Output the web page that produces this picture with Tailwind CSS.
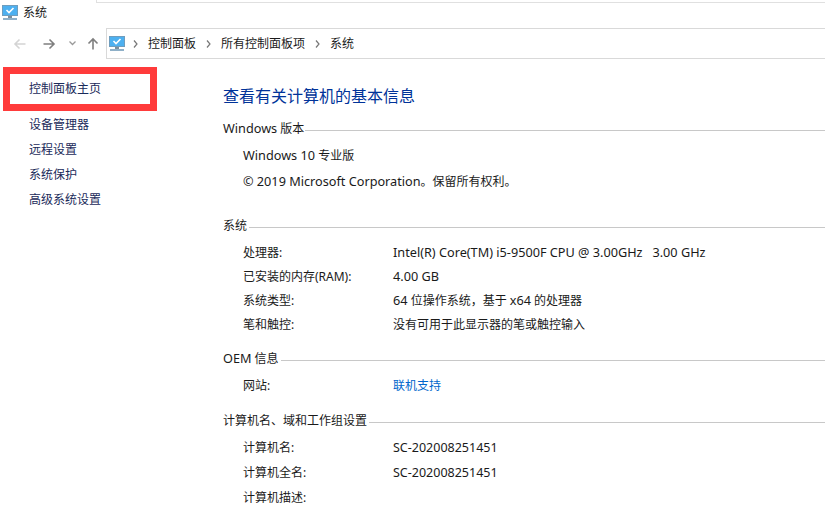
<!DOCTYPE html>
<html lang="zh-CN">
<head>
    <meta charset="UTF-8">
    <title>系统</title>
    <script src="https://cdn.jsdelivr.net/npm/@tailwindcss/browser@4"></script>
</head>
<body class="w-[825px] h-[514px] overflow-hidden bg-white text-[12px] leading-[16px] text-[#1a1a1a] font-['Noto_Sans','Noto_Sans_CJK_SC',sans-serif]">
    <!-- title bar -->
    <div class="relative h-[28px] flex items-center pl-[2px] pb-[3px] gap-[5px]">
        <div class="absolute top-0 left-[96px] right-0 h-[3px] border-l border-b border-[#e0e0e0]"></div>
        <svg width="16" height="15" viewBox="0 0 16 15">
            <rect x="0" y="0" width="16" height="11" fill="#6f9dbd"/>
            <rect x="1" y="1" width="14" height="9" fill="#4db0f0"/>
            <path d="M4.500 5l2.500 2.500 4.500-4.500" fill="none" stroke="#fff" stroke-width="1.600"/>
            <rect x="6" y="11" width="4" height="2" fill="#7d8f9c"/>
            <rect x="1" y="13" width="14" height="2" fill="#8fb0c8"/>
        </svg>
        <span>系统</span>
    </div>
    <!-- nav bar -->
    <div class="h-[31px] flex items-center">
        <div class="w-[106px] flex items-center pl-[13px] shrink-0">
            <svg width="13" height="12" viewBox="0 0 13 12" class="mr-[17px]"><path d="M12.500 6H2M6.500 1.500L2 6l4.500 4.500" fill="none" stroke="#d4d4d4" stroke-width="1.600"/></svg>
            <svg width="13" height="12" viewBox="0 0 13 12" class="mr-[13px]"><path d="M0.500 6H11M6.500 1.500L11 6l-4.500 4.500" fill="none" stroke="#7f7f7f" stroke-width="1.600"/></svg>
            <svg width="7" height="5" viewBox="0 0 7 5" class="mr-[11px]"><path d="M0.500 0.500L3.500 3.500l3-3" fill="none" stroke="#9a9a9a" stroke-width="1.300"/></svg>
            <svg width="12" height="13" viewBox="0 0 12 13"><path d="M6 12.500V2M1.500 6.500L6 2l4.500 4.500" fill="none" stroke="#7f7f7f" stroke-width="1.600"/></svg>
        </div>
        <div class="flex-1 h-[31px] border-y border-l border-[#d9d9d9] flex items-center pl-[2px]">
            <svg width="16" height="15" viewBox="0 0 16 15" class="mr-[8px]">
                <rect x="0" y="0" width="16" height="11" fill="#6f9dbd"/>
                <rect x="1" y="1" width="14" height="9" fill="#4db0f0"/>
                <path d="M4.500 5l2.500 2.500 4.500-4.500" fill="none" stroke="#fff" stroke-width="1.600"/>
                <rect x="6" y="11" width="4" height="2" fill="#7d8f9c"/>
                <rect x="1" y="13" width="14" height="2" fill="#8fb0c8"/>
            </svg>
            <svg width="5" height="8" viewBox="0 0 5 8" class="mr-[10px]"><path d="M1 0.500L4 4 1 7.500" fill="none" stroke="#777" stroke-width="1.200"/></svg>
            <span>控制面板</span>
            <svg width="5" height="8" viewBox="0 0 5 8" class="mx-[10px]"><path d="M1 0.500L4 4 1 7.500" fill="none" stroke="#777" stroke-width="1.200"/></svg>
            <span>所有控制面板项</span>
            <svg width="5" height="8" viewBox="0 0 5 8" class="mx-[10px]"><path d="M1 0.500L4 4 1 7.500" fill="none" stroke="#777" stroke-width="1.200"/></svg>
            <span>系统</span>
        </div>
    </div>
    <div class="flex">
        <!-- left links -->
        <div class="w-[223px] shrink-0 text-[#1a2a5a]">
            <div class="relative h-[41px] pt-[22px] pl-[29px]">
                控制面板主页
                <div class="absolute left-[3px] top-[8px] w-[154px] h-[44px] border-[7px] border-[#ff3b3b]"></div>
            </div>
            <div class="flex flex-col gap-[9px] pl-[29px] pt-[17px]">
                <p>设备管理器</p>
                <p>远程设置</p>
                <p>系统保护</p>
                <p>高级系统设置</p>
            </div>
        </div>
        <!-- main -->
        <div class="flex-1 pt-[26px]">
            <h1 class="text-[16px] leading-[22px] text-[#003399]">查看有关计算机的基本信息</h1>
            <div class="flex items-center mt-[14px] h-[16px]"><span><span class="text-[12.7px] leading-[0]">Windows</span> 版本</span><div class="flex-1 border-t border-[#c8c8c8] ml-[1px] mt-[2px]"></div></div>
            <div class="pl-[20px] pt-[11px] flex flex-col gap-[10px]">
                <p><span class="text-[12.7px] leading-[0]">Windows 10</span> 专业版</p>
                <p><span class="text-[12.7px] leading-[0]">© 2019 Microsoft Corporation</span>。保留所有权利。</p>
            </div>
            <div class="flex items-center mt-[28px] h-[16px]"><span>系统</span><div class="flex-1 border-t border-[#c8c8c8] ml-[2px] mt-[2px]"></div></div>
            <div class="grid grid-cols-[150px_1fr] pl-[20px] pt-[11px] gap-y-[8px]">
                <p>处理器:</p><p><span class="text-[12.7px] leading-[0]">Intel(R) Core(TM) i5-9500F CPU @ 3.00GHz&nbsp;&nbsp; 3.00 GHz</span></p>
                <p>已安装的内存(RAM):</p><p><span class="text-[12.7px] leading-[0]">4.00 GB</span></p>
                <p>系统类型:</p><p><span class="text-[12.7px] leading-[0]">64</span> 位操作系统，基于 <span class="text-[12.7px] leading-[0]">x64</span> 的处理器</p>
                <p>笔和触控:</p><p>没有可用于此显示器的笔或触控输入</p>
            </div>
            <div class="flex items-center mt-[18px] h-[16px]"><span><span class="text-[12.7px] leading-[0]">OEM</span> 信息</span><div class="flex-1 border-t border-[#c8c8c8] ml-[2px] mt-[2px]"></div></div>
            <div class="grid grid-cols-[150px_1fr] pl-[20px] pt-[11px]">
                <p>网站:</p><p class="text-[#0066cc]">联机支持</p>
            </div>
            <div class="flex items-center mt-[19px] h-[16px]"><span>计算机名、域和工作组设置</span><div class="flex-1 border-t border-[#c8c8c8] ml-[2px] mt-[2px]"></div></div>
            <div class="grid grid-cols-[150px_1fr] pl-[20px] pt-[11px] gap-y-[9px]">
                <p>计算机名:</p><p><span class="text-[12.5px] leading-[0]">SC-202008251451</span></p>
                <p>计算机全名:</p><p><span class="text-[12.5px] leading-[0]">SC-202008251451</span></p>
                <p>计算机描述:</p><p></p>
            </div>
        </div>
    </div>
</body>
</html>
